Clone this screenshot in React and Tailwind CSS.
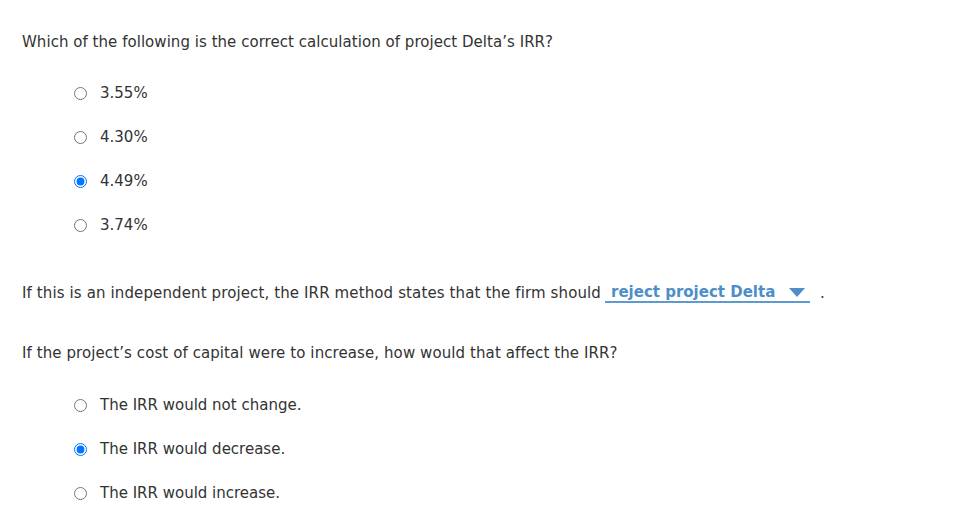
import { useState } from "react";

function Choice({ label, checked, onPick }) {
  return (
    <label className="flex items-center h-[20px] cursor-pointer">
      <input
        type="radio"
        checked={checked}
        onChange={onPick}
        className="m-0 w-[13px] h-[13px] ml-[52px] mr-[13px]"
      />
      <span>{label}</span>
    </label>
  );
}

export default function App() {
  const [irr, setIrr] = useState("4.49%");
  const [effect, setEffect] = useState("decrease");

  const irrOptions = ["3.55%", "4.30%", "4.49%", "3.74%"];
  const effectOptions = [
    ["same", "The IRR would not change."],
    ["decrease", "The IRR would decrease."],
    ["increase", "The IRR would increase."],
  ];

  return (
    <div className="w-[954px] h-[530px] bg-white text-[#333] text-[15px] font-['DejaVu_Sans',Verdana,sans-serif] pl-[22px] pt-[32px]">
      <p className="h-[20px] leading-[20px] tracking-[0.04px]">
        Which of the following is the correct calculation of project Delta’s IRR?
      </p>

      {/* IRR choices */}
      <div className="mt-[31px] flex flex-col gap-[24px]">
        {irrOptions.map((o) => (
          <Choice key={o} label={o} checked={irr === o} onPick={() => setIrr(o)} />
        ))}
      </div>

      <div className="mt-[48px] flex items-end h-[20px] leading-[20px]">
        <span className="tracking-[0.12px]">
          If this is an independent project, the IRR method states that the firm should
        </span>
        <span className="ml-[4px] w-[205px] flex items-center justify-between border-b-2 border-[#5b9bd1] pl-[6px] pr-[5px] text-[#4d8ec9] font-bold text-[15px] leading-[18px]">
          reject project Delta
          <svg width="16" height="9" viewBox="0 0 16 9">
            <path d="M0 0h16L8 9z" fill="#4d8ec9" />
          </svg>
        </span>
        <span className="ml-[10px]">.</span>
      </div>

      <p className="mt-[40px] h-[20px] leading-[20px] tracking-[0.09px]">
        If the project’s cost of capital were to increase, how would that affect the IRR?
      </p>

      <div className="mt-[32px] flex flex-col gap-[24px]">
        {effectOptions.map(([k, t]) => (
          <Choice key={k} label={t} checked={effect === k} onPick={() => setEffect(k)} />
        ))}
      </div>
    </div>
  );
}
